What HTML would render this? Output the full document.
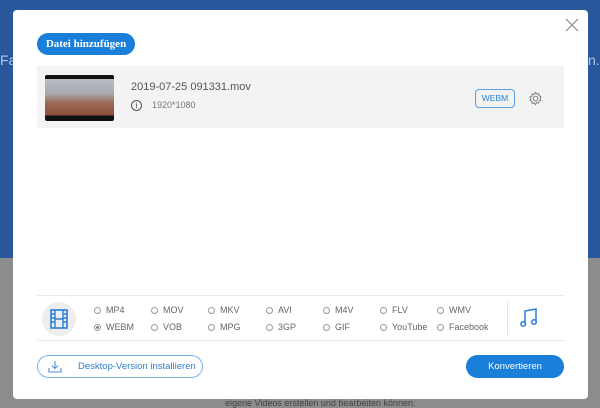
<!DOCTYPE html>
<html><head><style>
*{margin:0;padding:0;box-sizing:border-box}
body{width:600px;height:407px;overflow:hidden;position:relative;font-family:"Liberation Sans",sans-serif;background:#8c8c8c}
.blue{position:absolute;left:0;top:0;width:600px;height:258px;background:#28589b}
.bgt{position:absolute;color:#b8c8de;font-size:14px;top:52px}
.dlg{position:absolute;left:13px;top:10px;width:575px;height:389px;background:#fff;border-radius:4px}
.x{position:absolute;right:8px;top:7px;width:16px;height:16px}
.add{position:absolute;left:24px;top:23px;width:98px;height:22px;border-radius:11px;background:#1a7fd8;color:#fff;font-family:"Liberation Serif",serif;font-size:11px;font-weight:bold;text-align:center;line-height:22px}
.row{position:absolute;left:24px;top:56px;width:527px;height:62px;background:#f3f3f3}
.thumb{position:absolute;left:8px;top:9px;width:69px;height:46px;background:linear-gradient(#111 0 4px,#b7bcc4 4px,#a8aab0 40%,#9b6a55 60%,#8a4e3a 88%,#111 88%);border-radius:2px}
.name{position:absolute;left:94px;top:15px;font-size:11px;color:#555}
.res{position:absolute;left:94px;top:34px;font-size:9px;color:#777}
.res span{display:inline-block;width:11px;height:11px;border:1px solid #555;border-radius:50%;font-size:8px;text-align:center;line-height:9px;margin-right:10px;color:#444}
.webm{position:absolute;left:438px;top:23px;width:40px;height:19px;border:1px solid #5aa0e0;border-radius:4px;color:#2b7fd0;font-size:8.5px;text-align:center;line-height:17px}
.fmt{position:absolute;left:24px;top:285px;width:527px;height:46px;border-top:1px solid #e8e8e8;border-bottom:1px solid #e8e8e8}
.film{position:absolute;left:5px;top:6px;width:34px;height:34px;border-radius:50%;background:#eee}
.opt{position:absolute;font-size:9px;color:#666}
.opt i{display:inline-block;width:7px;height:7px;border:1px solid #999;border-radius:50%;margin-right:5px;vertical-align:-1px}
.opt i.s{background:radial-gradient(#777 35%,#fff 45%)}
.sep{position:absolute;left:470px;top:5px;width:1px;height:36px;background:#e3e3e3}
.desk{position:absolute;left:24px;top:345px;width:166px;height:23px;border:1px solid #7ab4ea;border-radius:12px;color:#2b7fd0;font-size:9.5px;line-height:21px;padding-left:40px}
.conv{position:absolute;left:453px;top:345px;width:98px;height:23px;border-radius:12px;background:#1a7fd8;color:#fff;font-size:9.5px;text-align:center;line-height:23px}
</style></head><body>
<div class="blue"></div>
<div class="bgt" style="left:0">Fa</div>
<div class="bgt" style="left:588px">n.</div>
<div style="position:absolute;left:225px;top:398px;color:#444;font-size:9px">eigene Videos erstellen und bearbeiten können.</div>
<div class="dlg">
<svg class="x" viewBox="0 0 16 16"><path d="M2 2L14 14M14 2L2 14" stroke="#999" stroke-width="1.3"/></svg>
<div class="add">Datei hinzufügen</div>
<div class="row">
<div class="thumb"></div>
<div class="name">2019-07-25 091331.mov</div>
<div class="res"><span>i</span>1920*1080</div>
<div class="webm">WEBM</div>
<svg style="position:absolute;left:491px;top:25px" width="15" height="15" viewBox="0 0 16 16"><circle cx="8" cy="8" r="2.5" fill="none" stroke="#777"/><path d="M8 1.5l1.3 1.8 2.1-.6.4 2.2 2 .9-.9 2 .9 2-2 .9-.4 2.2-2.1-.6L8 14.5l-1.3-1.8-2.1.6-.4-2.2-2-.9.9-2-.9-2 2-.9.4-2.2 2.1.6z" fill="none" stroke="#777"/></svg>
</div>
<div class="fmt">
<div class="film"><svg style="position:absolute;left:8px;top:7px" width="18" height="20" viewBox="0 0 18 20"><rect x="1" y="1" width="16" height="18" fill="none" stroke="#2b7fd8" stroke-width="1.6"/><path d="M5 1V19M13 1V19M1 5H5M1 9H5M1 13H5M13 5H17M13 9H17M13 13H17M5 10H13" stroke="#2b7fd8" stroke-width="1.4"/></svg></div>
<div class="opt" style="left:57px;top:9px"><i></i>MP4</div>
<div class="opt" style="left:114px;top:9px"><i></i>MOV</div>
<div class="opt" style="left:171px;top:9px"><i></i>MKV</div>
<div class="opt" style="left:229px;top:9px"><i></i>AVI</div>
<div class="opt" style="left:286px;top:9px"><i></i>M4V</div>
<div class="opt" style="left:343px;top:9px"><i></i>FLV</div>
<div class="opt" style="left:400px;top:9px"><i></i>WMV</div>
<div class="opt" style="left:57px;top:26px"><i class="s"></i>WEBM</div>
<div class="opt" style="left:114px;top:26px"><i></i>VOB</div>
<div class="opt" style="left:171px;top:26px"><i></i>MPG</div>
<div class="opt" style="left:229px;top:26px"><i></i>3GP</div>
<div class="opt" style="left:286px;top:26px"><i></i>GIF</div>
<div class="opt" style="left:343px;top:26px"><i></i>YouTube</div>
<div class="opt" style="left:400px;top:26px"><i></i>Facebook</div>
<div class="sep"></div>
<svg style="position:absolute;left:483px;top:12px" width="18" height="20" viewBox="0 0 18 20"><path d="M5 16V3L16 1V14" fill="none" stroke="#2b7fd8" stroke-width="1.5"/><circle cx="3.2" cy="16" r="2.3" fill="none" stroke="#2b7fd8" stroke-width="1.5"/><circle cx="14" cy="14" r="2.3" fill="none" stroke="#2b7fd8" stroke-width="1.5"/></svg>
</div>
<div class="desk"><svg style="position:absolute;left:10px;top:4px" width="14" height="13" viewBox="0 0 14 13"><path d="M7 1V8M4 5.5L7 8.5L10 5.5M1 8V12H13V8" fill="none" stroke="#4a94dc" stroke-width="1.1"/></svg>Desktop-Version installieren</div>
<div class="conv">Konvertieren</div>
</div>
</body></html>
